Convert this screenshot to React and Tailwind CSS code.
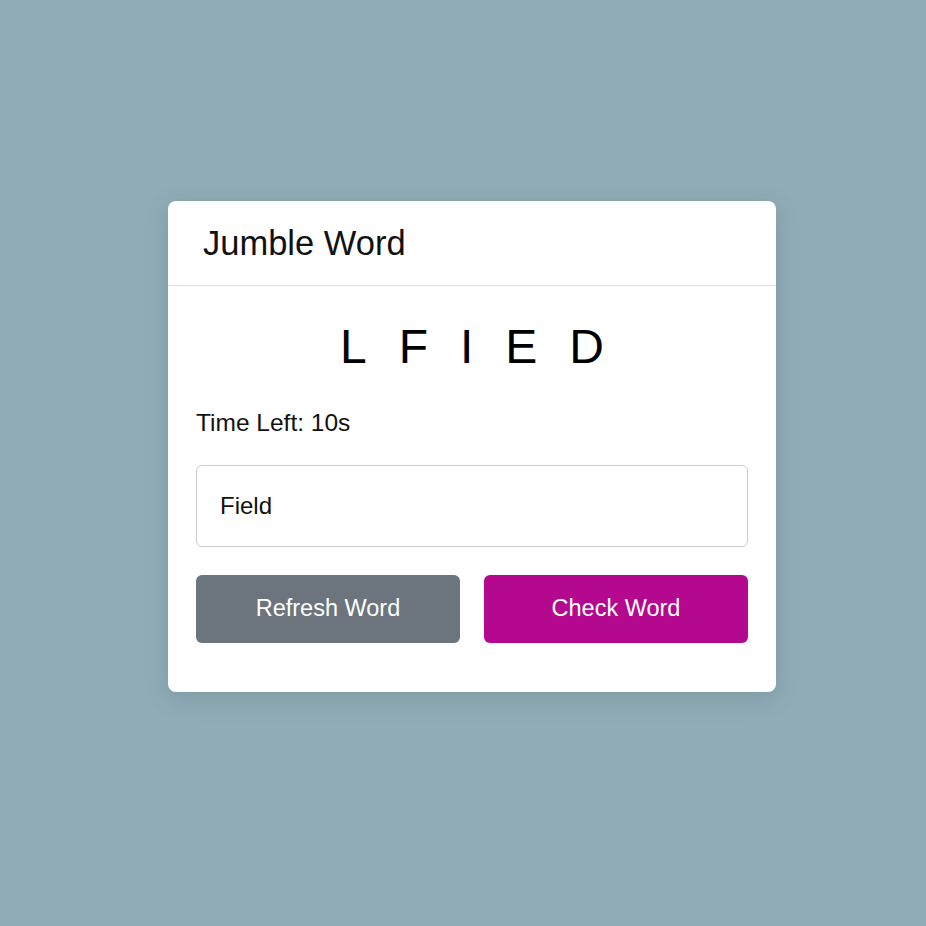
import { useState } from 'react';

const letters = ['L', 'F', 'I', 'E', 'D'];

const App = () => {
  const [guess, setGuess] = useState('Field');

  return (
    <div className="min-h-[926px] w-full bg-[#90adb7] pt-[201px] font-['Liberation_Sans',Arial,sans-serif]">
      <div className="ml-[168px] w-[608px] rounded-lg bg-white shadow-[0_6px_24px_rgba(40,60,70,0.18)]">
        <div className="flex h-[85px] items-center border-b border-[#dcdfe2] px-[35px]">
          <h1 className="text-[34.5px] leading-none text-[#111]">Jumble Word</h1>
        </div>

        <div className="px-7 pt-[33px] pb-[49px]">
          <div className="flex h-[55px] items-center justify-center gap-8 text-[48px] leading-none text-black">
            {letters.map((l, i) => (
              <span key={i}>{l}</span>
            ))}
          </div>

          <p className="mt-[35px] h-[28px] text-[24.5px] leading-[28px] text-[#111]">Time Left: 10s</p>

          <input
            type="text"
            value={guess}
            onChange={(e) => setGuess(e.target.value)}
            className="mt-[28px] block h-[82px] w-full rounded-md border border-[#c9cdd1] px-[23px] text-[24px] text-[#111] outline-none"
          />

          <div className="mt-[28px] grid grid-cols-2 gap-6">
            <button className="h-[68px] rounded-md bg-[#6c757d] text-[23.5px] text-white">Refresh Word</button>
            <button className="h-[68px] rounded-md bg-[#b4098f] text-[23.5px] text-white">Check Word</button>
          </div>
        </div>
      </div>
    </div>
  );
};

export default App;
